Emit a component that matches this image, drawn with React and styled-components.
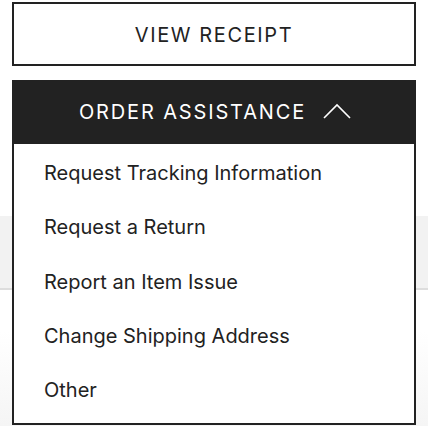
import styled, { createGlobalStyle } from "styled-components";

const GlobalStyle = createGlobalStyle`
  html, body {
    margin: 0;
    padding: 0;
    background: #ffffff;
  }
  body {
    font-family: 'Inter', 'Liberation Sans', sans-serif;
    color: #222222;
  }
`;

const items = [
  'Request Tracking Information',
  'Request a Return',
  'Report an Item Issue',
  'Change Shipping Address',
  'Other',
];

function App() {
  return (
    <>
      <GlobalStyle />
      <Page>
        <Actions>
          <OutlineButton>VIEW RECEIPT</OutlineButton>
          <Dropdown>
            <DropdownHeader>
              ORDER ASSISTANCE
              <svg width="28" height="16" viewBox="0 0 28 16" fill="none">
                <polyline points="1,15 14,2 27,15" stroke="#ffffff" strokeWidth="1.6" />
              </svg>
            </DropdownHeader>
            <Menu>
              {items.map((label) => (
                <MenuItem key={label}>{label}</MenuItem>
              ))}
            </Menu>
          </Dropdown>
        </Actions>
        <Spacer />
        <GrayBand />
        <Footer />
      </Page>
    </>
  );
}

const Page = styled.div`
  display: flex;
  flex-direction: column;
  min-height: 426px;
`;

const Actions = styled.div`
  display: flex;
  flex-direction: column;
  gap: 14px;
  padding: 2px 12px 0;
`;

const OutlineButton = styled.button`
  height: 64px;
  border: 2px solid #222222;
  background: #ffffff;
  font-family: 'Inter', 'Liberation Sans', sans-serif;
  font-size: 20px;
  font-weight: 400;
  letter-spacing: 1.6px;
  color: #222222;
  padding: 2px 0 0;
  cursor: pointer;
`;

const Dropdown = styled.div`
  position: relative;
  z-index: 2;
`;

const DropdownHeader = styled.button`
  width: 100%;
  height: 64px;
  display: flex;
  align-items: center;
  justify-content: center;
  gap: 17px;
  border: none;
  background: #222222;
  font-family: 'Inter', 'Liberation Sans', sans-serif;
  font-size: 20px;
  font-weight: 400;
  letter-spacing: 1.85px;
  color: #ffffff;
  padding: 0 0 0 2px;

  svg {
    margin-top: -2px;
  }
`;

const Menu = styled.ul`
  position: absolute;
  top: 100%;
  left: 0;
  right: 0;
  margin: 0;
  padding: 2px 0 6px;
  list-style: none;
  background: #ffffff;
  border: 2px solid #222222;
  border-top: none;
`;

const MenuItem = styled.li`
  height: 54.25px;
  display: flex;
  align-items: center;
  padding-left: 30px;
  font-size: 20px;
  font-weight: 400;
  color: #222222;
`;

const Spacer = styled.div`
  height: 72px;
`;

const GrayBand = styled.div`
  height: 72px;
  background: #f2f2f2;
  border-bottom: 2px solid #dddddd;
`;

const Footer = styled.div`
  flex: 1;
  background: linear-gradient(#ffffff 0%, #ffffff 30%, #f5f5f5 100%);
`;

export default App;
